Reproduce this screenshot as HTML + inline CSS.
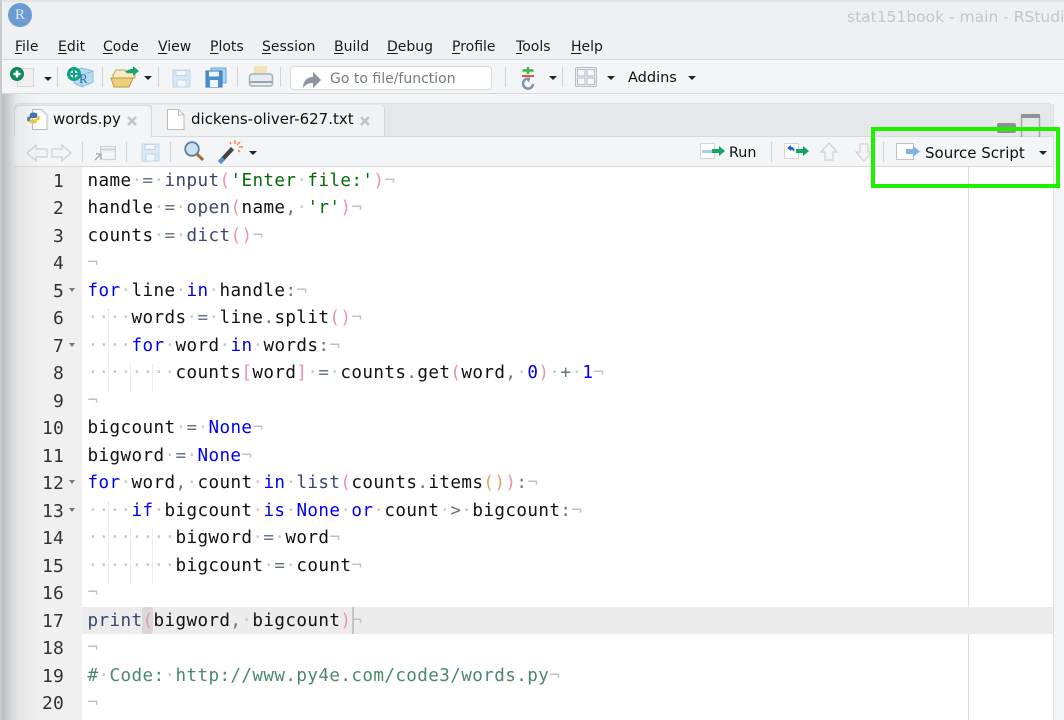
<!DOCTYPE html>
<html><head><meta charset="utf-8"><style>
html,body{margin:0;padding:0;width:1064px;height:720px;overflow:hidden;background:#f3f5f7}
body{position:relative;font-family:"DejaVu Sans","Liberation Sans",sans-serif;color:#000}
.a{position:absolute}
.m{position:absolute;top:38px;font-size:14px;line-height:18px;color:#1a1a1a;white-space:pre}
.m u{text-decoration-thickness:1px;text-underline-offset:2px}
.sep{position:absolute;width:1px;background:#d3d6d9}
.tri{position:absolute;width:0;height:0;border-left:4px solid transparent;border-right:4px solid transparent;border-top:4px solid #222}
.ln{position:absolute;left:20px;width:44px;margin-top:1px;text-align:right;font:18px/27px "DejaVu Sans Mono",monospace;letter-spacing:.16px;color:#333}
.c{position:absolute;left:87.5px;margin-top:1px;font:17.6px/27px "DejaVu Sans Mono",monospace;letter-spacing:.4px;white-space:pre;color:#111}
.k{color:#0000f0}.f{color:#39476f}.s{color:#036a07}.p{color:#eb94a9}.y{color:#d9a566}.o{color:#687687}.d{color:#c3c8cc}.r{color:#bfc3c7}.g{color:#4c886b}
.dl{position:absolute;width:0;border-left:1px dotted #dcdcdc}
.fold{position:absolute;left:69px;width:0;height:0;border-left:3.5px solid transparent;border-right:3.5px solid transparent;border-top:4px solid #777}
</style></head><body>

<!-- title + menu -->
<div class="a" style="left:0;top:0;width:1064px;height:59px;background:#eef0f2"></div>
<div class="a" style="left:0;top:0;width:1064px;height:2px;background:#e2e3e5"></div>
<div class="a" style="left:0;top:59px;width:1064px;height:1px;background:#d6d9dc"></div>
<div class="a" style="left:8px;top:3px;width:24px;height:24px;border-radius:50%;background:#6a9bd1;color:#dfe9f4;font:15px/24px 'Liberation Serif',serif;text-align:center">R</div>
<div class="a" style="left:847px;top:7px;font-size:15.5px;line-height:20px;color:#c4c6c9;white-space:pre">stat151book - main - RStudio</div>
<div class="m" style="left:15px"><u>F</u>ile</div>
<div class="m" style="left:58px"><u>E</u>dit</div>
<div class="m" style="left:103px"><u>C</u>ode</div>
<div class="m" style="left:158px"><u>V</u>iew</div>
<div class="m" style="left:210px"><u>P</u>lots</div>
<div class="m" style="left:262px"><u>S</u>ession</div>
<div class="m" style="left:334px"><u>B</u>uild</div>
<div class="m" style="left:387px"><u>D</u>ebug</div>
<div class="m" style="left:452px"><u>P</u>rofile</div>
<div class="m" style="left:516px"><u>T</u>ools</div>
<div class="m" style="left:571px"><u>H</u>elp</div>

<!-- main toolbar -->
<div class="a" style="left:0;top:93px;width:1064px;height:1px;background:#d6d9dc"></div>
<div class="a" style="left:290px;top:66px;width:200px;height:22px;background:#fff;border:1px solid #d8dbde;border-radius:4px"></div>
<svg class="a" style="left:0;top:60px" width="640" height="33" viewBox="0 0 640 33">
 <rect x="17.500" y="8.500" width="16" height="18" fill="#f0f0f0" stroke="#d8d8d8"/>
 <circle cx="17" cy="14" r="7" fill="#0c8a5c"/><path d="M13.500 14h7M17 10.500v7" stroke="#fff" stroke-width="2.500"/>
 <path d="M82 8l11 3v11l-11 5-8-4V11z" fill="#b7dcf2" stroke="#86bfe0"/><path d="M74 12l8 3 11-4M82 15v12" stroke="#86bfe0" fill="none"/>
 <text x="79" y="23" font-family="Liberation Serif" font-size="13" fill="#2f6aa6">R</text>
 <circle cx="74" cy="14" r="7" fill="#0fa283"/><circle cx="74" cy="14" r="3.800" fill="#fff"/><path d="M70.500 14h7M74 10.500v7" stroke="#0fa283" stroke-width="2"/>
 <path d="M113 15l3-5h9l2 3h8v5h-22z" fill="#f6edc6" stroke="#b9a259"/><path d="M111 18h22l-4 9h-15z" fill="#eccf78" stroke="#b9973f"/>
 <path d="M125 12c3-3 6-3 8-3V6l6 5-6 5v-3c-3 0-5 0-8-1z" fill="#17a577"/>
 <g fill="#d9e8f4" stroke="#c0d6e8"><path d="M173 10h17v17h-17z"/></g><path d="M176 10.500h10v5h-10zM177 20h9v7h-9z" fill="#f4f7fa" stroke="#c0d6e8"/>
 <rect x="211" y="8" width="15" height="15" fill="#a8d4ee" stroke="#6aa9d6"/>
 <path d="M206 11h16v16h-16z" fill="#4a8fd0" stroke="#3c78b6"/><path d="M209 11.500h10v5h-10zM210 20h8v7h-8z" fill="#eef5fb"/>
 <path d="M254 6h13v10h-13z" fill="#f2e3b8"/>
 <path d="M249.500 17c0-2 2-3 3-3h17c2 0 3 1 3 3v7c0 1-1 2-3 2h-17c-2 0-3-1-3-2z" fill="#e8edf1" stroke="#a9b0b8" stroke-width="1.500"/>
 <path d="M250 22h22" stroke="#9ba3ab" stroke-width="2"/>
 <path d="M303 28c0-7 4-11 10-11v-5l8 8-8 8v-5c-4 0-7 1-10 5z" fill="#8d959f"/>
 <path d="M528 7v7M522.500 10.500h11" stroke="#3fb648" stroke-width="2.500"/><path d="M522 16h12" stroke="#d9534f" stroke-width="2"/>
 <path d="M533 24a5 5 0 1 1-3-5" fill="none" stroke="#7f93a8" stroke-width="2.500"/><path d="M525 18l5 .5-1 4z" fill="#7f93a8"/>
 <rect x="575.500" y="7.500" width="21" height="19" rx="1.500" fill="#eef1f3" stroke="#b5bbc1"/>
 <path d="M577.500 9.500h7.500v6.500h-7.500zM587 9.500h7.500v6.500H587zM577.500 18h7.500v6.500h-7.500zM587 18h7.500v6.500H587z" fill="#f6f8f9" stroke="#b5bbc1"/>
</svg>
<div class="tri" style="left:44px;top:77px"></div>
<div class="tri" style="left:144px;top:76px"></div>
<div class="tri" style="left:549px;top:76px"></div>
<div class="tri" style="left:607px;top:76px"></div>
<div class="tri" style="left:688px;top:76px"></div>
<div class="sep" style="left:57px;top:67px;height:20px"></div>
<div class="sep" style="left:102px;top:67px;height:20px"></div>
<div class="sep" style="left:158px;top:67px;height:20px"></div>
<div class="sep" style="left:237px;top:67px;height:20px"></div>
<div class="sep" style="left:280px;top:67px;height:20px"></div>
<div class="sep" style="left:505px;top:67px;height:20px"></div>
<div class="sep" style="left:562px;top:67px;height:20px"></div>
<div class="a" style="left:330px;top:70px;font-size:14px;line-height:18px;color:#777b80;white-space:pre">Go to file/function</div>
<div class="a" style="left:628px;top:69px;font-size:14.5px;line-height:18px;color:#111">Addins</div>

<!-- source panel -->
<div class="a" style="left:14px;top:104px;width:1039px;height:33px;background:#e6e7e9;border-radius:5px 5px 0 0;box-shadow:0 -1px 0 #dcdee0,1px 0 0 #dcdee0"></div>
<div class="a" style="left:14px;top:105px;width:137px;height:32px;background:#f3f5f7;border-radius:5px 5px 0 0;box-shadow:inset 1px 1px 0 #dcdee0,1px 0 0 #d6d8da"></div>
<div class="a" style="left:152px;top:105px;width:232px;height:31px;background:#f1f2f4;box-shadow:1px 0 0 #d6d8da;border-radius:0 4px 0 0"></div>
<div class="a" style="left:14px;top:136px;width:137px;height:2px;background:#f3f5f7"></div>
<div class="a" style="left:151px;top:136px;width:902px;height:1px;background:#d8dadd"></div>
<svg class="a" style="left:24px;top:107px" width="170" height="26" viewBox="0 0 170 26">
 <path d="M8.500 2.500h9l5.500 5.500v14.500H8.500z" fill="#fff" stroke="#bbb"/>
 <g transform="translate(3 3.500) scale(.68)">
 <path d="M9 3c-4 0-5 2-5 4v2H1c-1 2-1 6 0 7h3v-2c0-2 2-3 3-3h6c1 0 2-1 2-2V5c0-1-2-2-6-2z" fill="#3f77a8"/>
 <path d="M9 19c4 0 6-1 6-3v-2h3c1-1 1-5 0-6h-3v2c0 2-2 3-3 3H6c-1 0-2 1-2 2v2c0 1 1 2 5 2z" fill="#f2c73d"/></g>
 <path d="M143.500 2.500h11l5.500 5.500v14.500h-16.500z" fill="#fff" stroke="#bbb"/><path d="M154.500 2.500V8h5.500" fill="none" stroke="#bbb"/>
</svg>
<div class="a" style="left:53px;top:110px;font-size:15px;line-height:19px;color:#111;white-space:pre">words.py</div>
<div class="a" style="left:191px;top:110px;font-size:15px;line-height:19px;color:#111;white-space:pre">dickens-oliver-627.txt</div>
<svg class="a" style="left:127px;top:115px" width="248" height="12" viewBox="0 0 248 12"><path d="M1 2l8 8M9 2l-8 8M234 2l8 8M242 2l-8 8" stroke="#c2c4c7" stroke-width="2.500"/></svg>
<svg class="a" style="left:996px;top:112px" width="60" height="28" viewBox="0 0 60 28"><rect x="1" y="11" width="19" height="10" rx="2" fill="#8d9298"/><rect x="25.500" y="4" width="18" height="22" rx="1" fill="none" stroke="#a4a8ad" stroke-width="1.500"/><rect x="25" y="2" width="19" height="4" rx="1" fill="#8d9298"/></svg>

<!-- source toolbar -->
<div class="a" style="left:14px;top:137px;width:1039px;height:29px;background:#f3f5f7"></div>
<div class="a" style="left:14px;top:166px;width:1039px;height:1px;background:#d8dadd"></div>
<svg class="a" style="left:14px;top:137px" width="1039" height="29" viewBox="0 0 1039 29">
 <g fill="#f2f4f5" stroke="#cfd2d5" stroke-width="1.200">
 <path d="M13 16l9-8v4h11v8H22v4z"/><path d="M57 16l-9-8v4H38v8h10v4z"/>
 <path d="M86.500 9.500h15v13h-15z"/><path d="M815 6l-8 9h4v8h8v-8h4z"/><path d="M850 24l-8-9h4V7h8v8h4z"/></g>
 <path d="M86.500 12.500h15" stroke="#cfd2d5" stroke-width="2"/>
 <path d="M81 23l6-6m-5 0h5v5" stroke="#a9aeb3" fill="none" stroke-width="1.500"/>
 <path d="M128 7h17v17h-17z" fill="#dce9f4" stroke="#c0d6e8"/><path d="M131 7.500h10v5h-10zM132 17h9v7h-9z" fill="#f4f7fa" stroke="#c0d6e8"/>
 <circle cx="178" cy="12" r="6.800" fill="#c9e2f6" stroke="#5f7f9c" stroke-width="1.800"/><path d="M183 17l6 6" stroke="#a8692c" stroke-width="3"/>
 <path d="M204 24l13-14 3 3-13 14z" fill="#444"/><path d="M204 24l4-4 3 3-4 4z" fill="#4c97d8"/>
 <path d="M221 3v4M226 5l-3 3M229 10h-4M226 15l-2-2M216 5l1 2" stroke="#ef8a5a" stroke-width="1.500"/>
 <path d="M686.500 6.500h14v15h-14z" fill="#fff" stroke="#d3d6d9"/><path d="M688 14.500h11" stroke="#a9c9ee" stroke-width="3"/><path d="M698 12h7V9l6 5-6 5v-3h-7z" fill="#12a564"/>
 <path d="M770.500 6.500h14v15h-14z" fill="#fff" stroke="#d3d6d9"/><path d="M773 11l4-3v2c3 0 4 2 3 5-1-2-2-3-3-2v1z" fill="#1b5fd6"/><path d="M782 12h7V9l6 5-6 5v-3h-7z" fill="#12a564"/>
 <path d="M882.500 6.500h17v16h-17z" fill="#fff" stroke="#bfc3c7"/><path d="M892 12h7V9l7 5.500-7 5.500v-3h-7z" fill="#7fb3e2"/>
</svg>
<div class="sep" style="left:82px;top:142px;height:20px"></div>
<div class="sep" style="left:126px;top:142px;height:20px"></div>
<div class="sep" style="left:170px;top:142px;height:20px"></div>
<div class="sep" style="left:771px;top:142px;height:20px"></div>
<div class="sep" style="left:883px;top:142px;height:20px"></div>
<div class="tri" style="left:249px;top:151px"></div>
<div class="tri" style="left:1039px;top:151px"></div>
<div class="a" style="left:729px;top:144px;font-size:14.3px;line-height:18px;color:#111">Run</div>
<div class="a" style="left:925px;top:144px;font-size:15px;line-height:18px;color:#111;white-space:pre">Source Script</div>

<!-- editor -->
<div class="a" style="left:14px;top:167px;width:1039px;height:553px;background:#fff"></div>
<div class="a" style="left:14px;top:167px;width:68px;height:553px;background:#f0f0f0"></div>
<div class="a" style="left:1053px;top:104px;width:1px;height:616px;background:#dcdee0"></div>
<div class="a" style="left:968px;top:167px;width:1px;height:553px;background:#dcdcdc"></div>
<div class="a" style="left:82px;top:607px;width:971px;height:27px;background:#ececec"></div>
<div class="a" style="left:142px;top:607px;width:11px;height:27px;background:#d8d8d8;border-radius:3px"></div>
<div class="a" style="left:352px;top:607px;width:2px;height:27px;background:#c4c4c4"></div>

<!-- left shadow -->
<div class="a" style="left:0;top:0;width:2px;height:720px;background:#c9cbcd"></div>
<div class="a" style="left:2px;top:94px;width:40px;height:626px;background:linear-gradient(90deg,rgba(120,120,120,.45),rgba(160,160,160,.12) 40%,rgba(255,255,255,0))"></div>

<div class="dl" style="left:108px;top:309px;height:82px"></div>
<div class="dl" style="left:130px;top:364px;height:27px"></div>
<div class="dl" style="left:152px;top:364px;height:27px"></div>
<div class="dl" style="left:108px;top:502px;height:82px"></div>
<div class="dl" style="left:130px;top:529px;height:55px"></div>
<div class="dl" style="left:152px;top:529px;height:55px"></div>

<div class="ln" style="top:167px">1</div><div class="ln" style="top:194px">2</div><div class="ln" style="top:222px">3</div><div class="ln" style="top:249px">4</div><div class="ln" style="top:277px">5</div><div class="ln" style="top:304px">6</div><div class="ln" style="top:332px">7</div><div class="ln" style="top:359px">8</div><div class="ln" style="top:387px">9</div><div class="ln" style="top:414px">10</div><div class="ln" style="top:442px">11</div><div class="ln" style="top:469px">12</div><div class="ln" style="top:497px">13</div><div class="ln" style="top:524px">14</div><div class="ln" style="top:552px">15</div><div class="ln" style="top:579px">16</div><div class="ln" style="top:607px">17</div><div class="ln" style="top:634px">18</div><div class="ln" style="top:662px">19</div><div class="ln" style="top:689px">20</div>
<div class="fold" style="top:288px"></div><div class="fold" style="top:343px"></div><div class="fold" style="top:480px"></div><div class="fold" style="top:508px"></div>

<div class="c" style="top:167px">name<span class="d">·</span><span class="o">=</span><span class="d">·</span><span class="f">input</span><span class="p">(</span><span class="s">'Enter<span class="d">·</span>file:'</span><span class="p">)</span><span class="r">¬</span></div>
<div class="c" style="top:194px">handle<span class="d">·</span><span class="o">=</span><span class="d">·</span><span class="f">open</span><span class="p">(</span>name<span class="o">,</span><span class="d">·</span><span class="s">'r'</span><span class="p">)</span><span class="r">¬</span></div>
<div class="c" style="top:222px">counts<span class="d">·</span><span class="o">=</span><span class="d">·</span><span class="f">dict</span><span class="p">()</span><span class="r">¬</span></div>
<div class="c" style="top:249px"><span class="r">¬</span></div>
<div class="c" style="top:277px"><span class="k">for</span><span class="d">·</span>line<span class="d">·</span><span class="k">in</span><span class="d">·</span>handle<span class="o">:</span><span class="r">¬</span></div>
<div class="c" style="top:304px"><span class="d">····</span>words<span class="d">·</span><span class="o">=</span><span class="d">·</span>line<span class="o">.</span>split<span class="p">()</span><span class="r">¬</span></div>
<div class="c" style="top:332px"><span class="d">····</span><span class="k">for</span><span class="d">·</span>word<span class="d">·</span><span class="k">in</span><span class="d">·</span>words<span class="o">:</span><span class="r">¬</span></div>
<div class="c" style="top:359px"><span class="d">········</span>counts<span class="p">[</span>word<span class="p">]</span><span class="d">·</span><span class="o">=</span><span class="d">·</span>counts<span class="o">.</span>get<span class="p">(</span>word<span class="o">,</span><span class="d">·</span><span class="k">0</span><span class="p">)</span><span class="d">·</span><span class="o">+</span><span class="d">·</span><span class="k">1</span><span class="r">¬</span></div>
<div class="c" style="top:387px"><span class="r">¬</span></div>
<div class="c" style="top:414px">bigcount<span class="d">·</span><span class="o">=</span><span class="d">·</span><span class="k">None</span><span class="r">¬</span></div>
<div class="c" style="top:442px">bigword<span class="d">·</span><span class="o">=</span><span class="d">·</span><span class="k">None</span><span class="r">¬</span></div>
<div class="c" style="top:469px"><span class="k">for</span><span class="d">·</span>word<span class="o">,</span><span class="d">·</span>count<span class="d">·</span><span class="k">in</span><span class="d">·</span><span class="f">list</span><span class="p">(</span>counts<span class="o">.</span>items<span class="y">()</span><span class="p">)</span><span class="o">:</span><span class="r">¬</span></div>
<div class="c" style="top:497px"><span class="d">····</span><span class="k">if</span><span class="d">·</span>bigcount<span class="d">·</span><span class="k">is</span><span class="d">·</span><span class="k">None</span><span class="d">·</span><span class="k">or</span><span class="d">·</span>count<span class="d">·</span><span class="o">&gt;</span><span class="d">·</span>bigcount<span class="o">:</span><span class="r">¬</span></div>
<div class="c" style="top:524px"><span class="d">········</span>bigword<span class="d">·</span><span class="o">=</span><span class="d">·</span>word<span class="r">¬</span></div>
<div class="c" style="top:552px"><span class="d">········</span>bigcount<span class="d">·</span><span class="o">=</span><span class="d">·</span>count<span class="r">¬</span></div>
<div class="c" style="top:579px"><span class="r">¬</span></div>
<div class="c" style="top:607px"><span class="f">print</span><span class="p">(</span>bigword<span class="o">,</span><span class="d">·</span>bigcount<span class="p">)</span><span class="r">¬</span></div>
<div class="c" style="top:634px"><span class="r">¬</span></div>
<div class="c" style="top:662px"><span class="g">#<span class="d">·</span>Code:<span class="d">·</span>http://www.py4e.com/code3/words.py</span><span class="r">¬</span></div>
<div class="c" style="top:689px"><span class="r">¬</span></div>

<!-- green highlight -->
<div class="a" style="left:871px;top:127px;width:181px;height:53px;border:4px solid #1ff000"></div>
</body></html>
